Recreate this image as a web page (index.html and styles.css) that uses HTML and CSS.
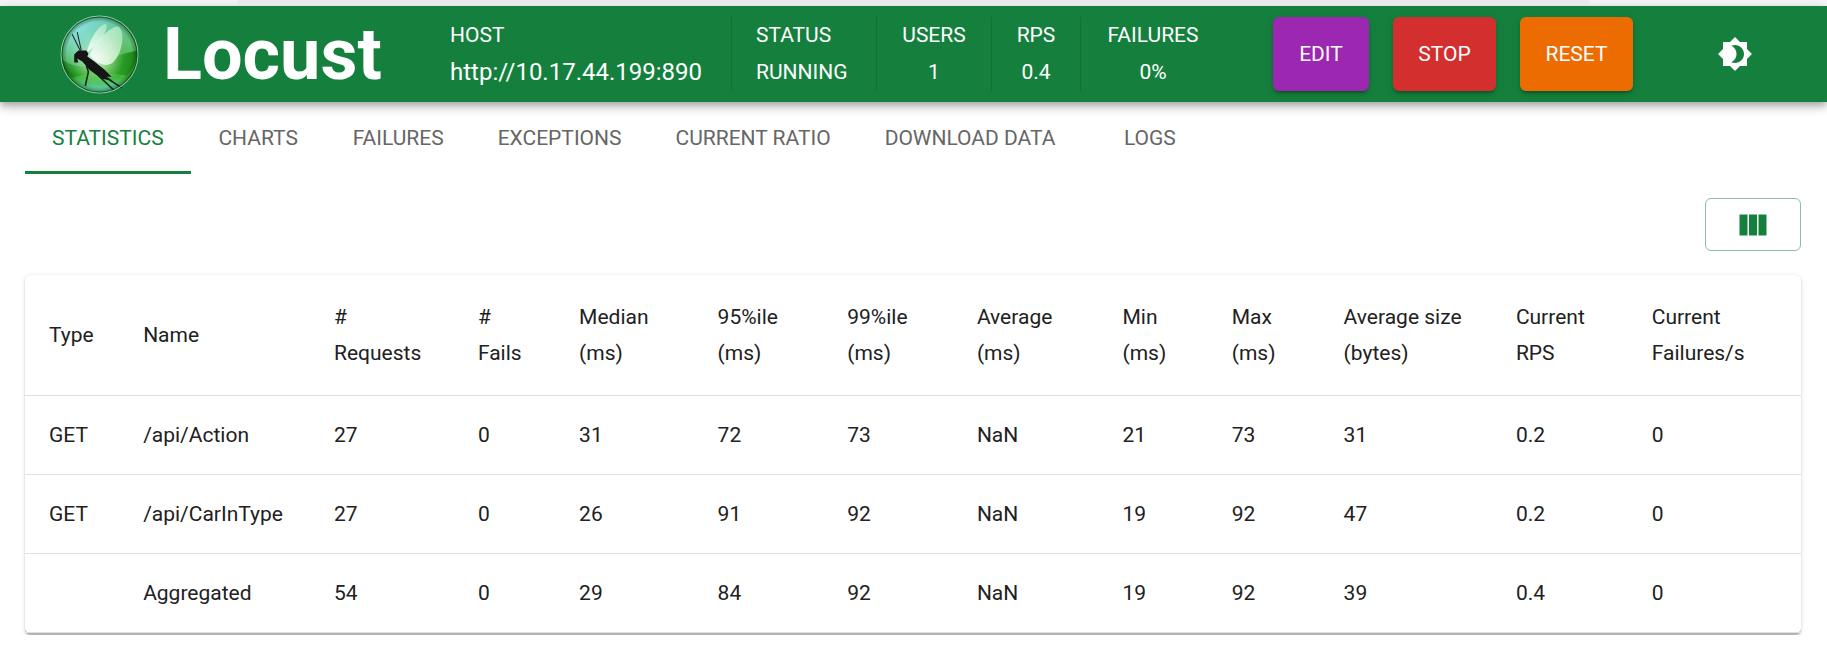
FILE: index.html
```html
<!DOCTYPE html>
<html lang="en">
<head>
<meta charset="utf-8">
<title>Locust</title>
<link rel="stylesheet" href="styles.css">
</head>
<body>
<div class="strip"><div class="strip-tab"></div></div>
<header class="bar">
  <a class="brand" href="#">
    <svg class="logo" viewBox="0 0 78 78" aria-hidden="true">
      <defs>
        <linearGradient id="orb" x1="0" y1="0" x2="0" y2="1">
          <stop offset="0" stop-color="#62c4a4"/>
          <stop offset=".35" stop-color="#62c274"/>
          <stop offset=".58" stop-color="#4fb350"/>
          <stop offset=".8" stop-color="#3fb53a"/>
          <stop offset="1" stop-color="#6cd4bc"/>
        </linearGradient>
        <radialGradient id="sky" cx=".2" cy=".15" r=".6">
          <stop offset="0" stop-color="#8fe6ee" stop-opacity=".85"/>
          <stop offset="1" stop-color="#8fe6ee" stop-opacity="0"/>
        </radialGradient>
        <radialGradient id="glow" cx=".46" cy=".54" r=".36">
          <stop offset="0" stop-color="#fff" stop-opacity=".9"/>
          <stop offset="1" stop-color="#b8f59a" stop-opacity="0"/>
        </radialGradient>
        <radialGradient id="edge" cx=".5" cy=".5" r=".5">
          <stop offset=".86" stop-color="#043a10" stop-opacity="0"/>
          <stop offset="1" stop-color="#043a10" stop-opacity=".5"/>
        </radialGradient>
        <linearGradient id="wing" x1="1" y1="0" x2="0" y2="1">
          <stop offset="0" stop-color="#c5f2cc" stop-opacity=".6"/>
          <stop offset="1" stop-color="#fff" stop-opacity=".9"/>
        </linearGradient>
        <linearGradient id="ground" x1="0" y1="0" x2="1" y2="0">
          <stop offset="0" stop-color="#0b7a08" stop-opacity=".85"/>
          <stop offset=".5" stop-color="#1c9a12" stop-opacity=".15"/>
          <stop offset="1" stop-color="#0b7a08" stop-opacity=".85"/>
        </linearGradient>
      </defs>
      <circle cx="39" cy="39" r="37.5" fill="url(#orb)"/>
      <path d="M2 44Q20 56 40 47T76 35Q76 50 66 60Q40 54 12 62Q2 54 2 44" fill="url(#ground)"/>
      <circle cx="39" cy="39" r="37.5" fill="url(#glow)"/>
      <circle cx="39" cy="39" r="37.5" fill="url(#sky)"/>
      <circle cx="39" cy="39" r="37.5" fill="url(#edge)"/>
      <path d="M27 35C30 23 38 11 44 9C48 9 46 16 41 23Q35 31 27 37Z" fill="url(#wing)"/>
      <path d="M29 40C34 27 47 13 57 11C65 15 62 36 54 45C48 53 38 49 29 40Z" fill="url(#wing)"/>
      <path d="M14 39L18 35L26 35L28 38L27 41L34 46L44 54L51 61L46 61L52 65L41 63L29 54L22 46L17 43L18 47L14 47Z" fill="#151515"/>
      <path d="M20 35L12 19M21 35L17 17" fill="none" stroke="#223" stroke-width="1"/>
      <path d="M26 50L28 56L25 70M38 60L53 74M46 62L61 72" fill="none" stroke="#122019" stroke-width="1.5"/>
      <circle cx="39" cy="39" r="38" fill="none" stroke="#8fcf9f" stroke-width="1"/>
      <circle cx="39" cy="39" r="37" fill="none" stroke="#08310f" stroke-opacity=".6" stroke-width="1"/>
    </svg>
    <span class="name">Locust</span>
  </a>
  <dl class="stats">
    <div class="stat stat-host"><dt>HOST</dt><dd>http://10.17.44.199:890</dd></div>
    <div class="stat stat-status"><dt>STATUS</dt><dd>RUNNING</dd></div>
    <div class="stat stat-users"><dt>USERS</dt><dd>1</dd></div>
    <div class="stat stat-rps"><dt>RPS</dt><dd>0.4</dd></div>
    <div class="stat stat-failures"><dt>FAILURES</dt><dd>0%</dd></div>
  </dl>
  <div class="actions">
    <button class="action edit" type="button">EDIT</button>
    <button class="action stop" type="button">STOP</button>
    <button class="action reset" type="button">RESET</button>
  </div>
  <button class="theme" type="button" aria-label="Toggle theme">
    <svg viewBox="0 0 24 24" aria-hidden="true"><path d="M20 8.69V4h-4.69L12 .69 8.69 4H4v4.69L.69 12 4 15.31V20h4.69L12 23.31 15.31 20H20v-4.69L23.31 12 20 8.69zM12 18c-.89 0-1.74-.2-2.5-.55C11.56 16.5 13 14.42 13 12s-1.44-4.5-3.5-5.45C10.26 6.2 11.11 6 12 6c3.31 0 6 2.69 6 6s-2.69 6-6 6z"/></svg>
  </button>
</header>
<main class="content">
  <nav class="tabs">
    <a class="tab active" href="#">STATISTICS</a>
    <a class="tab" href="#">CHARTS</a>
    <a class="tab" href="#">FAILURES</a>
    <a class="tab" href="#">EXCEPTIONS</a>
    <a class="tab" href="#">CURRENT RATIO</a>
    <a class="tab" href="#">DOWNLOAD DATA</a>
    <a class="tab" href="#">LOGS</a>
  </nav>
  <div class="tools">
    <button class="columns" type="button" aria-label="Choose columns">
      <svg viewBox="0 0 24 24" aria-hidden="true"><path d="M14.67 5v14H9.33V5h5.34zm1 14H21V5h-5.33v14zm-7.34 0V5H3v14h5.33z"/></svg>
    </button>
  </div>
  <div class="card">
    <table class="table">
      <colgroup>
        <col class="w-type"><col class="w-name"><col class="w-requests"><col class="w-fails"><col class="w-median"><col class="w-ile"><col class="w-ile"><col class="w-average"><col class="w-min"><col class="w-max"><col class="w-size"><col class="w-rps"><col class="w-failures">
      </colgroup>
      <thead>
        <tr><th>Type</th><th>Name</th><th>#<br>Requests</th><th>#<br>Fails</th><th>Median<br>(ms)</th><th>95%ile<br>(ms)</th><th>99%ile<br>(ms)</th><th>Average<br>(ms)</th><th>Min<br>(ms)</th><th>Max<br>(ms)</th><th>Average size<br>(bytes)</th><th>Current<br>RPS</th><th>Current<br>Failures/s</th></tr>
      </thead>
      <tbody>
        <tr><td>GET</td><td>/api/Action</td><td>27</td><td>0</td><td>31</td><td>72</td><td>73</td><td>NaN</td><td>21</td><td>73</td><td>31</td><td>0.2</td><td>0</td></tr>
        <tr><td>GET</td><td>/api/CarInType</td><td>27</td><td>0</td><td>26</td><td>91</td><td>92</td><td>NaN</td><td>19</td><td>92</td><td>47</td><td>0.2</td><td>0</td></tr>
        <tr><td></td><td>Aggregated</td><td>54</td><td>0</td><td>29</td><td>84</td><td>92</td><td>NaN</td><td>19</td><td>92</td><td>39</td><td>0.4</td><td>0</td></tr>
      </tbody>
    </table>
  </div>
</main>
</body>
</html>
```
FILE: styles.css
```css
* { box-sizing: border-box; }
body { margin: 0; background: #fff; color: #212121; font-family: Roboto, sans-serif; font-size: 21px; line-height: 30px; }
a { color: inherit; text-decoration: none; }
button { font: inherit; cursor: pointer; }

.strip { display: flex; justify-content: center; height: 6px; background: #f7f7f7; }
.strip-tab { width: 74%; background: #eee; border-bottom: 3px solid #f5f5f5; }

.bar { position: relative; display: flex; align-items: center; padding: 11px 74px 11px 60px; background: #15803d; color: #fff; box-shadow: 0 3px 6px -1px rgba(0,0,0,.2), 0 6px 8px rgba(0,0,0,.14), 0 2px 15px rgba(0,0,0,.12); }
.brand { display: flex; align-items: center; gap: 24px; }
.logo { width: 79px; height: 79px; margin: -3px 0; }
.name { padding-top: 2px; font-size: 72px; font-weight: 700; line-height: 72px; }

.stats { display: flex; margin: 0 0 0 auto; }
.stat { padding: 0 24px; height: 74px; display: flex; flex-direction: column; align-items: center; justify-content: space-between; }
.stat + .stat { border-left: 1px solid rgba(0,0,0,.12); }
.stat-host { width: 305px; align-items: flex-start; }
.stat-status { width: 145px; align-items: flex-start; }
.stat-users { width: 115px; }
.stat-rps { width: 89px; }
.stat-failures { width: 145px; }
.stat dt { line-height: 36px; }
.stat dd { margin: 0; line-height: 38px; }
.stat-host dd { font-size: 24px; }

.actions { display: flex; gap: 24px; margin-left: 48px; }
.action { height: 74px; padding: 0 24px; border: 0; border-radius: 6px; color: #fff; box-shadow: 0 4px 2px -3px rgba(0,0,0,.2), 0 3px 3px rgba(0,0,0,.14), 0 2px 8px rgba(0,0,0,.12); }
.edit { min-width: 96px; background: #9c27b0; }
.stop { min-width: 103px; background: #d32f2f; }
.reset { min-width: 113px; background: #ed6c02; }
.theme { display: flex; margin-left: 84px; padding: 0; border: 0; background: none; }
.theme svg { width: 36px; height: 36px; fill: #fff; }

.content { padding: 0 26px 0 25px; }
.tabs { display: flex; }
.tab { display: flex; align-items: center; justify-content: center; min-width: 135px; height: 72px; padding: 3px 27px 0; color: #666; border-bottom: 3px solid transparent; white-space: nowrap; }
.tab.active { color: #15803d; border-color: #15803d; }
.tools { display: flex; justify-content: flex-end; padding: 24px 0; }
.columns { display: flex; align-items: center; justify-content: center; width: 96px; height: 53px; padding: 0; background: #fff; border: 1px solid #8abf9e; border-radius: 6px; }
.columns svg { width: 36px; height: 36px; fill: #15803d; }

.card { border-bottom: 2px solid #b4b4b4; border-radius: 6px; background: #fff; box-shadow: 0 1px 2px rgba(0,0,0,.14), 0 1px 5px rgba(0,0,0,.12); }
.table { width: 100%; table-layout: fixed; border-collapse: separate; border-spacing: 0; }
.table th, .table td { padding: 24px 0 24px 24px; border-bottom: 1px solid #e0e0e0; text-align: left; font-weight: 400; white-space: nowrap; }
.table th { line-height: 36px; }
.w-type { width: 5.3%; }
.w-name { width: 10.75%; }
.w-requests { width: 8.1%; }
.w-fails { width: 5.7%; }
.w-median { width: 7.8%; }
.w-ile { width: 7.3%; }
.w-average { width: 8.2%; }
.w-min { width: 6.15%; }
.w-max { width: 6.3%; }
.w-size { width: 9.7%; }
.w-rps { width: 7.65%; }
.w-failures { width: 9.75%; }
```
